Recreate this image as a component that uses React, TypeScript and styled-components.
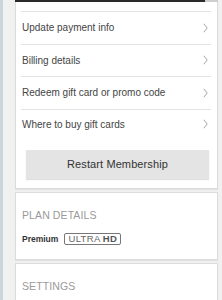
import React from "react";
import styled, { createGlobalStyle } from "styled-components";

const Global = createGlobalStyle`
  html, body {
    margin: 0;
    padding: 0;
    background: #f1f1f1;
    font-family: "Liberation Sans", Arial, sans-serif;
    overflow: hidden;
  }
`;

const Page = styled.div`
  display: flex;
  height: 300px;
  overflow: hidden;
`;

const SideStrip = styled.div`
  width: 3px;
  flex: none;
  background: #c9d6dc;
`;

const Column = styled.div`
  flex: 1;
  display: flex;
  flex-direction: column;
  gap: 3px;
  padding: 0 4px 0 12px;
`;

const Card = styled.section`
  background: #fff;
  border: 1px solid #dcdcdc;
  box-shadow: 0 1px 1px rgba(0, 0, 0, 0.06);
`;

const TopEdge = styled.div`
  display: flex;
  height: 2px;
  margin: -1px -1px 0;
`;

const TopDark = styled.div`
  flex: 1;
  background: #2a2a2a;
`;

const TopLight = styled.div`
  width: 13px;
  background: #cfcfcf;
`;

const List = styled.ul`
  list-style: none;
  margin: 9px 6px 0 5px;
  padding: 0;
`;

const Row = styled.li<{ $last?: boolean }>`
  display: flex;
  align-items: center;
  justify-content: space-between;
  height: ${(p) => (p.$last ? 29 : 31.5)}px;
  border-top: 1px solid #e4e4e4;
  padding: 0 3px 0 1px;
  font-size: 10px;
  color: #444;
`;

const Chevron = () => (
  <svg width="5" height="10" viewBox="0 0 5 10" fill="none">
    <path d="M0.8 0.8 L4.2 5 L0.8 9.2" stroke="#9a9a9a" strokeWidth="0.9" />
  </svg>
);

const Button = styled.button`
  display: block;
  width: 183px;
  height: 29px;
  margin: 11px 0 9px 10px;
  border: none;
  background: #e4e4e4;
  box-shadow: 0 1px 1px rgba(0, 0, 0, 0.12);
  font-family: "Liberation Sans", Arial, sans-serif;
  font-size: 11px;
  font-weight: 500;
  color: #333;
  letter-spacing: 0.1px;
`;

const Section = styled.div<{ $pb: number }>`
  padding: 16px 6px ${(p) => p.$pb}px;
`;

const Heading = styled.h2`
  margin: 0;
  font-size: 10.5px;
  line-height: 13px;
  font-weight: 400;
  color: #9a9a9a;
  letter-spacing: 0.1px;
`;

const PlanRow = styled.div`
  display: flex;
  align-items: center;
  gap: 6px;
  margin-top: 11px;
`;

const PlanName = styled.span`
  font-size: 8.5px;
  font-weight: 700;
  color: #333;
`;

const Badge = styled.span`
  display: inline-flex;
  align-items: center;
  height: 10px;
  padding: 0 3px;
  border: 1px solid #777;
  border-radius: 2px;
  font-size: 9.5px;
  color: #666;
  letter-spacing: 0.4px;
  b {
    margin-left: 2px;
    color: #555;
  }
`;

const items = [
  "Update payment info",
  "Billing details",
  "Redeem gift card or promo code",
  "Where to buy gift cards",
];

export default function App() {
  return (
    <>
      <Global />
      <Page>
        <SideStrip />
        <Column>
          <Card>
            <TopEdge>
              <TopDark />
              <TopLight />
            </TopEdge>
            <List>
              {items.map((t, i) => (
                <Row key={t} $last={i === items.length - 1}>
                  {t}
                  <Chevron />
                </Row>
              ))}
            </List>
            <Button>Restart Membership</Button>
          </Card>
          <Card>
            <Section $pb={14}>
              <Heading>PLAN DETAILS</Heading>
              <PlanRow>
                <PlanName>Premium</PlanName>
                <Badge>
                  ULTRA<b>HD</b>
                </Badge>
              </PlanRow>
            </Section>
          </Card>
          <Card>
            <Section $pb={30}>
              <Heading>SETTINGS</Heading>
            </Section>
          </Card>
        </Column>
      </Page>
    </>
  );
}
